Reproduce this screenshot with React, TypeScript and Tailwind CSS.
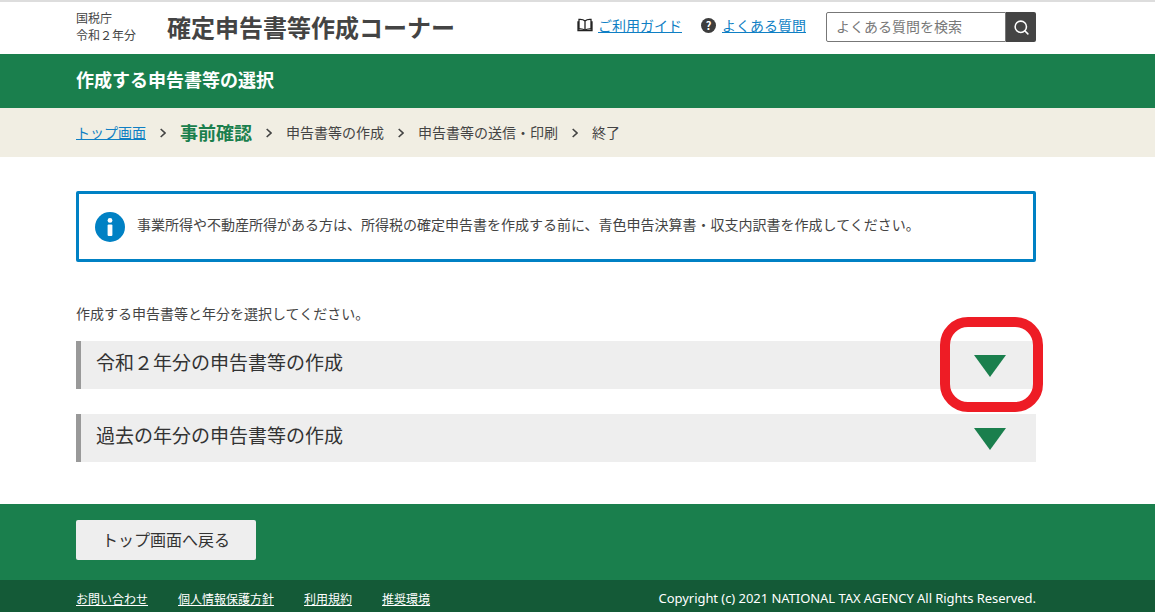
import { Search } from "lucide-react";

const font = "font-['Noto_Sans_CJK_JP','Noto_Sans_CJK_SC',sans-serif]";

function Accordion({ title, highlighted }: { title: string; highlighted?: boolean }) {
  return (
    <div className="relative flex h-12 items-center justify-between border-l-[5px] border-[#999999] bg-[#eeeeee] pl-[15px] pr-[30px]">
      <span className="relative top-[-4px] text-[19px] leading-none text-[#333333]">{title}</span>
      <svg width="32" height="22" viewBox="0 0 32 22" className="relative top-[1px]">
        <polygon points="0,0 32,0 16,22" fill="#1a7f4d" />
      </svg>
      {highlighted && (
        <div className="absolute left-[859px] top-[-24px] h-[95px] w-[103px] rounded-[28px] border-[10px] border-[#ee1c25]" />
      )}
    </div>
  );
}

function Chevron() {
  return (
    <svg width="6" height="10" viewBox="0 0 6 10" fill="none" stroke="#444444" strokeWidth="1.6" className="mx-[14px]">
      <path d="M0.7 1L5 5L0.7 9" />
    </svg>
  );
}

export default function App() {
  return (
    <div className={`${font} h-[612px] w-[1155px] overflow-hidden bg-white text-[#333333]`}>
      <header className="flex h-[54px] items-center border-t-2 border-[#dddddd] pl-[76px]">
        <div className="mb-[5px] w-[91px] text-[12px] leading-[17px] text-[#444444]">
          <div>国税庁</div>
          <div>令和２年分</div>
        </div>
        <div className="mb-[2px] w-[410px] text-[24px] font-bold leading-none text-[#444444]">確定申告書等作成コーナー</div>
        <div className="flex items-center">
          <div className="mb-[6px] flex items-center">
            <svg width="16" height="14" viewBox="0 0 16 14" fill="none" stroke="#222222" strokeWidth="1.3" className="mr-[5px]">
              <path d="M8 3C6.5 1.6 4 1.2 2 1.4V11C4 10.8 6.5 11 8 12.4C9.5 11 12 10.8 14 11V1.4C12 1.2 9.5 1.6 8 3ZM8 3V12.4M2 4H1V12.6H15V4H14" />
            </svg>
            <a href="#" className="text-[14px] text-[#0f7fc4] underline">ご利用ガイド</a>
            <span className="ml-[19px] mr-[6px] flex h-[15px] w-[15px] items-center justify-center rounded-full bg-[#3d3d3d] text-[11px] font-bold leading-none text-white">?</span>
            <a href="#" className="text-[14px] text-[#0f7fc4] underline">よくある質問</a>
          </div>
          <div className="mb-[2px] ml-[20px] flex h-[30px] w-[210px]">
            <div className="flex w-[180px] items-center rounded-l-[2px] border border-[#777777] pb-[2px] pl-[9px] text-[14px] text-[#777777]">よくある質問を検索</div>
            <div className="flex w-[30px] items-center justify-center rounded-r-[2px] bg-[#444444]">
              <Search size={17} color="#ffffff" strokeWidth={2.2} />
            </div>
          </div>
        </div>
      </header>

      <div className="flex h-[54px] items-center bg-[#1a7f4d] pb-[3px] pl-[76px] text-[18px] font-bold text-white">作成する申告書等の選択</div>

      <nav className="flex h-[49px] items-center bg-[#f1eee3] pl-[76px] text-[14px] text-[#444444]">
        <a href="#" className="text-[14px] text-[#0f7fc4] underline">トップ画面</a>
        <Chevron />
        <span className="text-[18px] font-bold text-[#1a7f4d]">事前確認</span>
        <Chevron />
        <span>申告書等の作成</span>
        <Chevron />
        <span>申告書等の送信・印刷</span>
        <Chevron />
        <span>終了</span>
      </nav>

      <main className="ml-[76px] w-[960px] pt-[34px]">
        <div className="flex h-[71px] items-center rounded-[2px] border-[3px] border-[#0081c4] pl-[16px] text-[14px] text-[#444444]">
          <span className="mr-[12px] flex h-[30px] w-[30px] items-center justify-center rounded-full bg-[#0081c4]">
            <svg width="6" height="18" viewBox="0 0 6 18" fill="#ffffff">
              <circle cx="3" cy="2.4" r="2.4" />
              <rect x="0.6" y="6.5" width="4.8" height="11.5" rx="1" />
            </svg>
          </span>
          <span className="relative top-[-2px]">事業所得や不動産所得がある方は、所得税の確定申告書を作成する前に、青色申告決算書・収支内訳書を作成してください。</span>
        </div>

        <p className="mt-[41px] h-[36px] text-[14px] leading-[20px] text-[#444444]">作成する申告書等と年分を選択してください。</p>

        <div className="mt-[2px] flex flex-col gap-[25px]">
          <Accordion title="令和２年分の申告書等の作成" highlighted />
          <Accordion title="過去の年分の申告書等の作成" />
        </div>
      </main>

      <footer className="mt-[42px]">
        <div className="flex h-[76px] items-start bg-[#1a7f4d] pl-[76px] pt-[16px]">
          <button className="h-10 w-[180px] rounded-[2px] bg-[#eeeeee] pb-[2px] text-[16px] text-[#333333]">トップ画面へ戻る</button>
        </div>
        <div className="flex h-[32px] w-full items-center justify-between bg-[#145a37] pl-[76px] pr-[119px] pt-[6px] text-[12px] text-white">
          <div className="flex gap-[30px]">
            <a href="#" className="underline">お問い合わせ</a>
            <a href="#" className="underline">個人情報保護方針</a>
            <a href="#" className="underline">利用規約</a>
            <a href="#" className="underline">推奨環境</a>
          </div>
          <span className="font-['Noto_Sans','Noto_Sans_CJK_JP',sans-serif] text-[13px] tracking-[-0.05px]">Copyright (c) 2021 NATIONAL TAX AGENCY All Rights Reserved.</span>
        </div>
      </footer>
    </div>
  );
}
